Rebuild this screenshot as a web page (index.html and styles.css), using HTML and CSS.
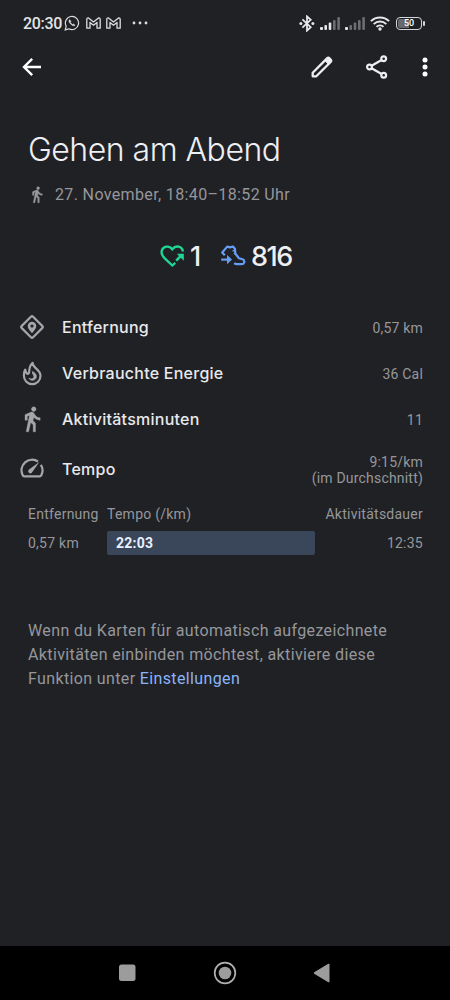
FILE: index.html
```html
<!DOCTYPE html>
<html lang="de">
<head>
  <meta charset="UTF-8">
  <meta name="viewport" content="width=device-width, initial-scale=1.0">
  <title>Gehen am Abend</title>
  <link rel="stylesheet" href="styles.css">
</head>
<body>

  <header class="status-bar">
    <span class="clock">20:30</span>
    <svg class="whatsapp" width="16" height="16" viewBox="0 0 16 16" fill="none" stroke="#dcdde0" stroke-width="1.2">
      <path d="M1.2 14.8l1-3.6a6.6 6.6 0 1 1 2.6 2.6z"/>
      <path d="M5.600 4.600c-1.200 1-.6 2.800 1 4.400s3.500 2.400 4.500 1.200l-1.700-1.300-1 .7-2-2 .6-1z" fill="#dcdde0" stroke-width=".5"/>
    </svg>
    <svg class="gmail" width="15" height="12" viewBox="0 0 15 12" fill="none" stroke="#dcdde0" stroke-width="1.300" stroke-linejoin="round">
      <path d="M.8 11.200V2.200Q.8.800 2.200.8L7.500 5 12.800.8Q14.200.8 14.200 2.200v9h-3.200V5.400L7.500 8.200 4 5.400v5.800z"/>
    </svg>
    <svg class="gmail" width="15" height="12" viewBox="0 0 15 12" fill="none" stroke="#dcdde0" stroke-width="1.300" stroke-linejoin="round">
      <path d="M.8 11.200V2.200Q.8.800 2.200.8L7.500 5 12.800.8Q14.200.8 14.200 2.200v9h-3.200V5.400L7.500 8.200 4 5.400v5.800z"/>
    </svg>
    <svg class="more" width="16" height="4" viewBox="0 0 16 4" fill="#dcdde0">
      <circle cx="2" cy="2" r="1.400"/><circle cx="8" cy="2" r="1.400"/><circle cx="14" cy="2" r="1.400"/>
    </svg>
    <div class="status-right">
      <svg width="16" height="17" viewBox="0 0 16 17" fill="none" stroke="#e6e7ea" stroke-width="1.800">
        <path d="M3.400 4.300l8.300 7.900L8 15.600V1.400l3.700 3.400-8.300 7.900"/>
        <g fill="#e6e7ea" stroke="none"><circle cx="1.900" cy="8.500" r="1.500"/><circle cx="13.900" cy="8.500" r="1.500"/></g>
      </svg>
      <svg class="signal" width="20" height="13" viewBox="0 0 20 13" fill="#e6e7ea">
        <rect x="0" y="10" width="3" height="3" rx="1"/><rect x="4.400" y="8" width="2.600" height="5" rx="1"/><rect x="8.700" y="5.500" width="2.600" height="7.500" rx="1"/>
        <g fill="#6d6e72"><rect x="13" y="3" width="2.600" height="10" rx="1"/><rect x="17.300" y="0" width="2.600" height="13" rx="1"/></g>
      </svg>
      <svg class="signal" width="20" height="13" viewBox="0 0 20 13" fill="#6d6e72">
        <rect x="0" y="10" width="3" height="3" rx="1" fill="#e6e7ea"/><rect x="4.400" y="8" width="2.600" height="5" rx="1"/><rect x="8.700" y="5.500" width="2.600" height="7.500" rx="1"/><rect x="13" y="3" width="2.600" height="10" rx="1"/><rect x="17.300" y="0" width="2.600" height="13" rx="1"/>
      </svg>
      <svg class="wifi" width="20" height="15" viewBox="0 0 20 15" fill="none" stroke="#e6e7ea" stroke-width="2">
        <path d="M.9 5.100a13 13 0 0 1 18.200 0M3.700 8.100a9 9 0 0 1 12.600 0M6.500 10.900a5 5 0 0 1 7 0"/>
        <circle cx="10" cy="13" r="1.700" fill="#e6e7ea" stroke="none"/>
      </svg>
      <div class="battery"><span>50</span></div>
    </div>
  </header>

  <nav class="app-bar">
    <svg class="back" width="20" height="20" viewBox="0 0 20 20" fill="none" stroke="#fff" stroke-width="2.400">
      <path d="M19 10H2.500M10.200 1.800L2 10l8.200 8.200"/>
    </svg>
    <svg class="edit" width="24" height="24" viewBox="0 0 24 24" fill="none" stroke="#eeeff2" stroke-width="2.300" stroke-linejoin="round">
      <path d="M2.700 17.700L17 3.400a1.800 1.800 0 0 1 2.500 0l1.100 1.100a1.800 1.800 0 0 1 0 2.500L6.300 21.300H2.700z"/>
      <path d="M14.800 5.600L17.400 3q1.100-.8 2.200.2l1.200 1.200q1 1.100.2 2.200l-2.600 2.600z" fill="#eeeff2" stroke-width="1"/>
    </svg>
    <svg class="share" width="22" height="24" viewBox="0 0 22 24" fill="none" stroke="#eeeff2" stroke-width="2.200">
      <circle cx="3.500" cy="12" r="2.400"/><circle cx="17.700" cy="3.800" r="2.400"/><circle cx="17.700" cy="20.200" r="2.400"/>
      <path d="M5.600 10.800l10-5.800M5.600 13.200l10 5.800"/>
    </svg>
    <svg class="menu" width="6" height="20" viewBox="0 0 6 20" fill="#fff">
      <circle cx="3" cy="3" r="2.500"/><circle cx="3" cy="10" r="2.500"/><circle cx="3" cy="17" r="2.500"/>
    </svg>
  </nav>

  <main>
    <h1 class="title">Gehen am Abend</h1>
    <div class="meta">
      <svg width="18" height="19" viewBox="0 0 24 24" fill="#96979b" stroke="#96979b" stroke-width=".5">
        <path d="M13.500 5.500c1.100 0 2-.9 2-2s-.9-2-2-2-2 .9-2 2 .9 2 2 2zM9.800 8.900L7 23h2.100l1.800-8 2.100 2v6h2v-7.500l-2.100-2 .6-3C14.800 12 16.800 13 19 13v-2c-1.900 0-3.500-1-4.300-2.400l-1-1.600c-.4-.6-1-1-1.700-1-.3 0-.5.100-.8.100L6 8.300V13h2V9.600l1.800-.7"/>
      </svg>
      <span>27. November, 18:40–18:52 Uhr</span>
    </div>

    <div class="points">
      <svg class="heart" width="26" height="24" viewBox="0 0 26 24" fill="none" stroke="#1fd795" stroke-width="2.300">
        <path d="M15.300 18.800L12.300 21.500 4.800 14.400C2 11.600 1.200 9.300 1.700 7 2.700 2.200 9 .8 12.300 5.300 15.800.8 22.200 2 22.900 7.500"/>
        <path d="M16.200 16.700l5-5" stroke-width="2.600"/>
        <path d="M16.800 9.800h7v7z" fill="#1fd795" stroke="none"/>
      </svg>
      <span class="points-heart">1</span>
      <svg class="shoe" width="26" height="24" viewBox="0 0 26 24" fill="none" stroke="#669df6" stroke-width="2.200" stroke-linejoin="round">
        <path d="M4.800 11.300L2.200 8.500 7.200 2.600l2.800.8 3-.9 2 2.500.3 4.500 3.700 4.800 3.500 1q2.300 1 1.700 3.200-.5 1.700-2.700 1.700H17.200q-1.800 0-3-1"/>
        <path d="M1.200 15.600h8"/>
        <path d="M7 11l5 4.600-5 4.600z" fill="#669df6" stroke="none"/>
        <path d="M12.500 7.200l2.500-1M13.800 9.800l2-1" stroke-width="1.400"/>
      </svg>
      <span>816</span>
    </div>

    <ul class="stats">
      <li>
        <svg width="26" height="26" viewBox="0 0 26 26" fill="none" stroke="#a5a6aa" stroke-width="2.200">
          <rect x="5" y="5" width="16" height="16" rx="1.200" transform="rotate(45 13 13)"/>
          <path d="M13 19.200c-2.900-3-4.300-5.200-4.300-7.200a4.300 4.300 0 0 1 8.600 0c0 2-1.400 4.200-4.300 7.200zm0-8.800a1.600 1.600 0 1 0 0 3.200 1.600 1.600 0 0 0 0-3.200z" fill="#a5a6aa" fill-rule="evenodd" stroke="none"/>
        </svg>
        <span class="label">Entfernung</span>
        <span class="value">0,57 km</span>
      </li>
      <li>
        <svg width="26" height="26" viewBox="0 0 26 26" fill="none" stroke="#a5a6aa" stroke-width="2.200" stroke-linejoin="round">
          <path d="M13.600 2.800c-.1 5.200 7.900 6.700 7.900 13a8.300 8.300 0 0 1-16.600 0c0-2.800.5-4.800 1.300-6.100.5 2.500 1.200 4.100 2.800 4.100 2.600 0-.6-6.300 4.600-11z"/>
          <path d="M13.600 11.500c-.8 2.500 1.300 3 1.300 5 0 2-2.200 3.300-5 1.700 1.500 2.500 4.700 2.600 6.500.8 1.800-2 1-4.700-1-6.200z" fill="#a5a6aa" stroke-width=".8"/>
        </svg>
        <span class="label">Verbrauchte Energie</span>
        <span class="value">36 Cal</span>
      </li>
      <li>
        <svg width="28" height="28" viewBox="0 0 24 24" fill="#a5a6aa" stroke="#a5a6aa" stroke-width=".3">
          <path d="M13.500 5.500c1.100 0 2-.9 2-2s-.9-2-2-2-2 .9-2 2 .9 2 2 2zM9.800 8.900L7 23h2.100l1.800-8 2.100 2v6h2v-7.500l-2.100-2 .6-3C14.800 12 16.800 13 19 13v-2c-1.900 0-3.500-1-4.300-2.400l-1-1.600c-.4-.6-1-1-1.700-1-.3 0-.5.100-.8.100L6 8.300V13h2V9.600l1.800-.7"/>
        </svg>
        <span class="label">Aktivitätsminuten</span>
        <span class="value">11</span>
      </li>
      <li class="tall">
        <svg width="26" height="26" viewBox="0 0 26 26" fill="none" stroke="#a5a6aa" stroke-width="2.200">
          <path d="M19 5.500A10.600 10.600 0 0 0 3.600 19Q4.100 20.300 5.200 20.300h15.600q1 0 1.500-1a10.600 10.600 0 0 0-.4-10.500"/>
          <path d="M20.500 5.800l-7.700 11a2.200 2.200 0 0 1-3.100-3.100z" fill="#a5a6aa" stroke="none"/>
        </svg>
        <span class="label">Tempo</span>
        <span class="value">9:15/km<br>(im Durchschnitt)</span>
      </li>
    </ul>

    <div class="pace">
      <span>Entfernung</span>
      <span>Tempo (/km)</span>
      <span class="right">Aktivitätsdauer</span>
      <span>0,57 km</span>
      <span class="bar">22:03</span>
      <span class="right">12:35</span>
    </div>

    <p class="hint">Wenn du Karten für automatisch aufgezeichnete Aktivitäten einbinden möchtest, aktiviere diese Funktion unter <a href="#">Einstellungen</a></p>
  </main>

  <footer class="nav-bar">
    <svg width="18" height="18" viewBox="0 0 18 18" fill="#9c9c9c"><rect x="1" y=".5" width="16.500" height="16.500" rx="2.500"/></svg>
    <svg width="24" height="24" viewBox="0 0 24 24" fill="#9c9c9c"><circle cx="12" cy="12" r="10.300" fill="none" stroke="#b0b0b0" stroke-width="1.700"/><circle cx="12" cy="12" r="6.300"/></svg>
    <svg width="18" height="20" viewBox="0 0 18 20" fill="#9c9c9c"><path d="M1.200 9.300L15.300.8q1.200-.5 1.200.7v17q0 1.200-1.200.7L1.200 10.700q-.9-.7 0-1.400z"/></svg>
  </footer>

</body>
</html>
```
FILE: styles.css
```css
* {
  box-sizing: border-box;
}
body {
  margin: 0;
  height: 1000px;
  display: flex;
  flex-direction: column;
  background: #202125;
  color: #96979b;
  font-family: Roboto, sans-serif;
}
svg {
  display: block;
  flex: none;
}
.status-bar {
  display: flex;
  align-items: center;
  height: 46px;
  padding: 0 25px 0 23px;
}
.clock {
  width: 41px;
  font-size: 16px;
  font-weight: 500;
  letter-spacing: -0.300px;
  color: #e3e4e7;
}
.gmail {
  margin-left: 5.500px;
}
.more {
  margin-left: 11px;
}
.status-right {
  display: flex;
  align-items: center;
  margin-left: auto;
}
.signal {
  margin-left: 5px;
}
.wifi {
  margin-left: 5px;
}
.battery {
  position: relative;
  width: 26px;
  height: 13px;
  margin: 0 3px 0 6px;
  border: 1.500px solid #d5d6d9;
  border-radius: 4px;
  background: linear-gradient(90deg, #68696d 50%, #202125 50%);
  background-clip: content-box;
  padding: 1px;
  color: #fff;
  font-size: 9px;
  font-weight: 500;
  line-height: 9px;
  text-align: center;
}
.battery::after {
  content: "";
  position: absolute;
  right: -4px;
  top: 3px;
  width: 2px;
  height: 5px;
  border-radius: 1px;
  background: #d5d6d9;
}
.app-bar {
  display: flex;
  align-items: center;
  height: 42px;
  padding: 0 22px 0 22px;
}
.edit {
  margin-left: auto;
}
.share {
  margin-left: 32px;
}
.menu {
  margin-left: 34px;
}
main {
  flex: 1;
  padding: 42px 27px 0 28px;
}
.title {
  margin: 0;
  font-family: Inter, sans-serif;
  font-size: 32px;
  font-weight: 300;
  line-height: 40px;
  letter-spacing: -0.500px;
  color: #eeeff2;
}
.meta {
  display: flex;
  align-items: center;
  gap: 9px;
  height: 20px;
  margin-top: 14px;
  font-size: 16px;
  letter-spacing: 0.360px;
}
.points {
  display: flex;
  align-items: center;
  height: 40px;
  margin: 32px 0 0 132px;
  font-family: Inter, sans-serif;
  font-size: 27px;
  font-weight: 500;
  letter-spacing: -1.500px;
  color: #eeeff2;
}
.points-heart {
  width: 30px;
  margin-left: 4px;
}
.shoe {
  margin-right: 5px;
}
.stats {
  list-style: none;
  margin: 28px 0 0 -9px;
  padding: 0;
}
.stats li {
  display: grid;
  grid-template-columns: 26px 1fr auto;
  column-gap: 17px;
  align-items: center;
  justify-items: center;
  height: 46px;
}
.stats .tall {
  height: 54px;
}
.label {
  justify-self: start;
  padding-bottom: 1px;
  font-family: Inter, sans-serif;
  font-size: 16px;
  font-weight: 500;
  letter-spacing: 0.250px;
  color: #e8e9ec;
}
.value {
  padding-top: 1px;
  font-size: 14px;
  line-height: 16px;
  letter-spacing: 0.200px;
  text-align: right;
}
.pace {
  display: grid;
  grid-template-columns: 79px 208px 1fr;
  grid-template-rows: 24px 24px;
  row-gap: 5px;
  align-items: center;
  margin-top: 6px;
  font-size: 14px;
  letter-spacing: 0.250px;
  white-space: nowrap;
}
.right {
  text-align: right;
}
.bar {
  height: 24px;
  padding-left: 9px;
  border-radius: 2px;
  background: #3a465a;
  color: #e8f0fe;
  font-weight: 700;
  line-height: 25px;
}
.hint {
  margin: 64px 0 0;
  font-size: 16px;
  line-height: 24px;
  letter-spacing: 0.370px;
}
.hint a {
  color: #8ab4f8;
  text-decoration: none;
}
.nav-bar {
  display: flex;
  align-items: center;
  justify-content: space-between;
  height: 54px;
  padding: 0 119px 0 118px;
  background: #000;
}
```
